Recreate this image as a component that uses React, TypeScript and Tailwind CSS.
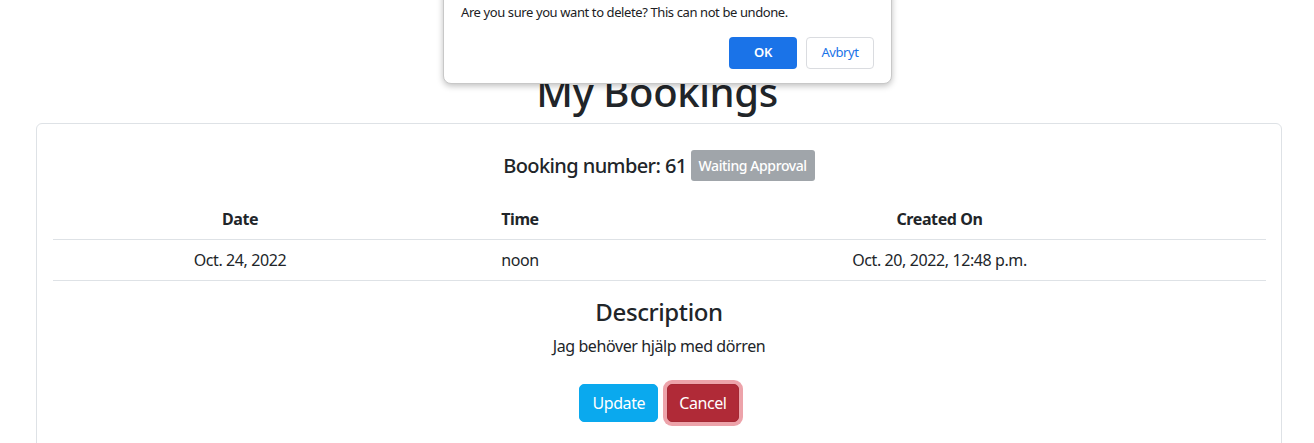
import React from "react";

export default function App() {
  return (
    <div className="relative w-[1314px] h-[443px] overflow-hidden bg-white text-[#212529] tracking-[-0.025em]" style={{ fontFamily: '"Noto Sans", "Open Sans", sans-serif' }}>
      <h1 className="pt-[68px] mb-[7px] text-center text-[40px] leading-[48px] font-medium">My Bookings</h1>
      <div className="ml-[36px] w-[1246px] border border-[#dee2e6] rounded-[6px] px-[16px] pt-[16px] pb-[40px]">
        <div className="pt-[10px] mb-[18px] flex items-center justify-center">
          <span className="text-[20px] leading-[24px] font-medium tracking-[-0.03em]">Booking number: 61</span>
          <span className="ml-[4px] h-[31px] px-[8px] flex items-center rounded-[3px] bg-[#a0a5aa] text-white text-[14px] font-medium">Waiting Approval</span>
        </div>
        <div className="grid grid-cols-[374px_186px_653px] text-center text-[16px] leading-[24px]">
          <div className="py-[8px] font-bold border-b border-[#dee2e6]">Date</div>
          <div className="py-[8px] font-bold border-b border-[#dee2e6]">Time</div>
          <div className="py-[8px] font-bold border-b border-[#dee2e6]">Created On</div>
          <div className="py-[8px] border-b border-[#dee2e6]">Oct. 24, 2022</div>
          <div className="py-[8px] border-b border-[#dee2e6]">noon</div>
          <div className="py-[8px] border-b border-[#dee2e6]">Oct. 20, 2022, 12:48 p.m.</div>
        </div>
        <h4 className="mt-[16px] mb-[8px] text-center text-[24px] leading-[29px] font-medium">Description</h4>
        <p className="text-center text-[16px] leading-[24px]">Jag behöver hjälp med dörren</p>
        <div className="mt-[26px] flex justify-center gap-[9px]">
          <button className="h-[38px] px-[12px] rounded-[5px] bg-[#0aa9ee] border border-[#0aa9ee] text-white text-[16px]">Update</button>
          <button className="h-[38px] px-[11px] rounded-[5px] bg-[#b02a37] border border-[#a52834] text-white text-[16px] ring-4 ring-[#eda3aa]">Cancel</button>
        </div>
      </div>
      <div className="absolute left-[443px] top-[-10px] w-[449px] h-[94px] bg-white border border-[#c8c8c8] rounded-b-[8px] shadow-[0_2px_6px_rgba(0,0,0,0.25)] px-[17px] pt-[12px]">
        <p className="text-[13px] leading-[18px] text-[#202124]">Are you sure you want to delete? This can not be undone.</p>
        <div className="mt-[16px] flex justify-end gap-[9px]">
          <button className="w-[68px] h-[32px] rounded-[4px] bg-[#1a73e8] text-white text-[13px] font-semibold">OK</button>
          <button className="w-[68px] h-[32px] rounded-[4px] bg-white border border-[#dadce0] text-[#1a73e8] text-[13px]">Avbryt</button>
        </div>
      </div>
    </div>
  );
}
